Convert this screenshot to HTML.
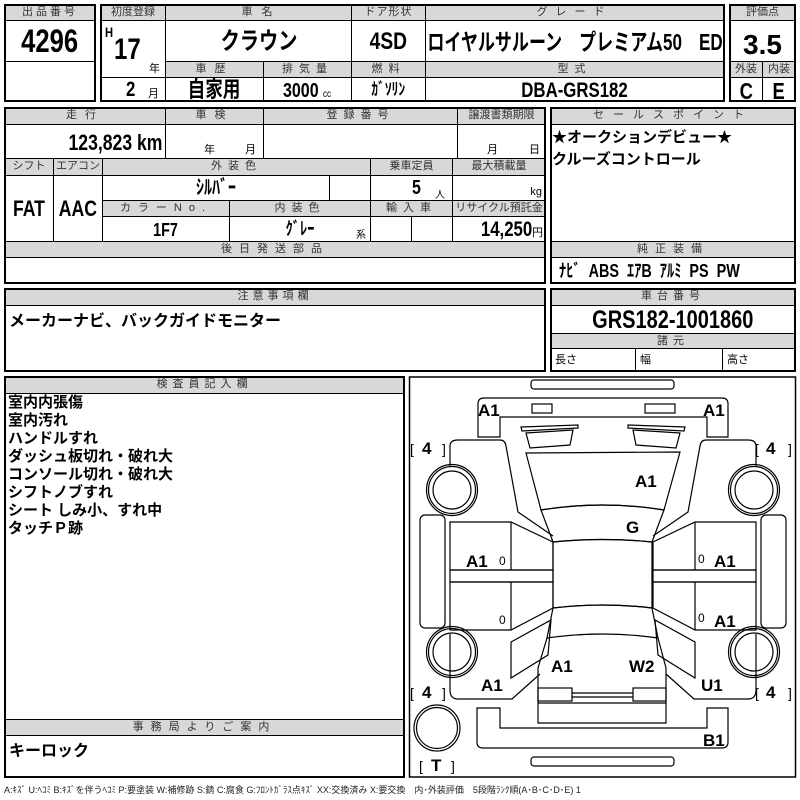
<!DOCTYPE html>
<html><head><meta charset="utf-8">
<style>
*{margin:0;padding:0}
body{width:800px;height:800px;background:#fff;position:relative;overflow:hidden;font-family:"Liberation Sans","Noto Sans CJK JP",sans-serif;color:#000}
.c{position:absolute;box-sizing:border-box;border:1px solid #000;overflow:hidden;white-space:nowrap;text-align:center}
.g{background:#d8d8d8;font-size:11px;color:#333;letter-spacing:3px;line-height:15px}
.v{font-weight:bold}
.n{display:inline-block;transform:scaleX(.8)}
.nr{display:inline-block;transform:scaleX(.8);transform-origin:right center}
.nl{display:inline-block;transform:scaleX(.8);transform-origin:left center}
.o{position:absolute;box-sizing:border-box;border:2px solid #000}
.t{position:absolute;white-space:nowrap}
.b{font-weight:bold}
</style></head><body>
<!-- block 1 -->
<div class="c g" style="left:4px;top:4px;width:92px;height:17px">出品番号</div>
<div class="c v" style="left:4px;top:20px;width:92px;height:42px;font-size:32px;line-height:40px"><span class="n">4296</span></div>
<div class="c" style="left:4px;top:61px;width:92px;height:41px"></div>
<div class="o" style="left:4px;top:4px;width:92px;height:98px"></div>
<!-- block 2 -->
<div class="c g" style="left:100px;top:4px;width:66px;height:17px;letter-spacing:0">初度登録</div>
<div class="c g" style="left:165px;top:4px;width:187px;height:17px">車 名</div>
<div class="c g" style="left:351px;top:4px;width:75px;height:17px;letter-spacing:1px">ドア形状</div>
<div class="c g" style="left:425px;top:4px;width:299px;height:17px;letter-spacing:8px">グレード</div>
<div class="c" style="left:100px;top:20px;width:66px;height:58px"></div>
<div class="t v" style="left:105px;top:24px;font-size:14px"><span class="nl">H</span></div>
<div class="t v" style="left:114px;top:33px;font-size:30px"><span class="nl">17</span></div>
<div class="t" style="left:149px;top:60px;font-size:11px">年</div>
<div class="c" style="left:100px;top:77px;width:66px;height:25px"></div>
<div class="t v" style="left:126px;top:78px;font-size:21px"><span class="nl">2</span></div>
<div class="t" style="left:148px;top:85px;font-size:11px">月</div>
<div class="c v" style="left:165px;top:20px;width:187px;height:42px;font-size:24px;line-height:42px"><span class="n">クラウン</span></div>
<div class="c v" style="left:351px;top:20px;width:75px;height:42px;font-size:24px;line-height:42px"><span class="n">4SD</span></div>
<div class="c v" style="left:425px;top:20px;width:299px;height:42px;font-size:23px;line-height:42px"><span style="position:absolute;left:50%;top:0;transform:translateX(-50%) scaleX(.74)">ロイヤルサルーン　プレミアム50　ED</span></div>
<div class="c g" style="left:165px;top:61px;width:99px;height:17px;letter-spacing:8px">車歴</div>
<div class="c g" style="left:263px;top:61px;width:89px;height:17px;letter-spacing:6px">排気量</div>
<div class="c g" style="left:351px;top:61px;width:75px;height:17px;letter-spacing:6px">燃料</div>
<div class="c g" style="left:425px;top:61px;width:299px;height:17px;letter-spacing:6px">型式</div>
<div class="c v" style="left:165px;top:77px;width:99px;height:25px;font-size:22px;line-height:24px"><span class="n">自家用</span></div>
<div class="c v" style="left:263px;top:77px;width:89px;height:25px;font-size:20px;line-height:26px"><span class="n">3000 <span style="font-size:10px;font-weight:normal">cc</span></span></div>
<div class="c v" style="left:351px;top:77px;width:75px;height:25px;font-size:17px;line-height:24px"><span class="n">ｶﾞｿﾘﾝ</span></div>
<div class="c v" style="left:425px;top:77px;width:299px;height:25px;font-size:21px;line-height:26px"><span class="n">DBA-GRS182</span></div>
<div class="o" style="left:100px;top:4px;width:625px;height:98px"></div>
<!-- block 3 -->
<div class="c g" style="left:729px;top:4px;width:67px;height:17px;letter-spacing:0">評価点</div>
<div class="c v" style="left:729px;top:20px;width:67px;height:42px;font-size:28px;line-height:48px">3.5</div>
<div class="c g" style="left:729px;top:61px;width:34px;height:17px;letter-spacing:0">外装</div>
<div class="c g" style="left:762px;top:61px;width:34px;height:17px;letter-spacing:0">内装</div>
<div class="c v" style="left:729px;top:77px;width:34px;height:25px;font-size:23px;line-height:26px"><span class="n">C</span></div>
<div class="c v" style="left:762px;top:77px;width:34px;height:25px;font-size:23px;line-height:26px"><span class="n">E</span></div>
<div class="o" style="left:729px;top:4px;width:67px;height:98px"></div>
<!-- section 2 -->
<div class="c g" style="left:4px;top:107px;width:162px;height:18px;letter-spacing:8px">走行</div>
<div class="c g" style="left:165px;top:107px;width:99px;height:18px;letter-spacing:8px">車検</div>
<div class="c g" style="left:263px;top:107px;width:195px;height:18px;letter-spacing:6px">登録番号</div>
<div class="c g" style="left:457px;top:107px;width:89px;height:18px;letter-spacing:0">譲渡書類期限</div>
<div class="c v" style="left:4px;top:124px;width:162px;height:35px;font-size:22px;line-height:36px;text-align:right;padding-right:3px"><span class="nr">123,823 km</span></div>
<div class="c" style="left:165px;top:124px;width:99px;height:35px"></div>
<div class="t" style="left:204px;top:141px;font-size:11px">年</div><div class="t" style="left:245px;top:141px;font-size:11px">月</div>
<div class="c" style="left:263px;top:124px;width:195px;height:35px"></div>
<div class="c" style="left:457px;top:124px;width:89px;height:35px"></div>
<div class="t" style="left:487px;top:141px;font-size:11px">月</div><div class="t" style="left:529px;top:141px;font-size:11px">日</div>
<div class="c g" style="left:4px;top:158px;width:50px;height:18px;letter-spacing:0">シフト</div>
<div class="c g" style="left:53px;top:158px;width:50px;height:18px;letter-spacing:0">エアコン</div>
<div class="c g" style="left:102px;top:158px;width:269px;height:18px;letter-spacing:6px">外装色</div>
<div class="c g" style="left:370px;top:158px;width:83px;height:18px;letter-spacing:0">乗車定員</div>
<div class="c g" style="left:452px;top:158px;width:94px;height:18px;letter-spacing:0">最大積載量</div>
<div class="c v" style="left:4px;top:175px;width:50px;height:67px;font-size:22px;line-height:66px"><span class="n">FAT</span></div>
<div class="c v" style="left:53px;top:175px;width:50px;height:67px;font-size:22px;line-height:66px"><span class="n">AAC</span></div>
<div class="c v" style="left:102px;top:175px;width:228px;height:26px;font-size:20px;line-height:25px"><span class="n">ｼﾙﾊﾞｰ</span></div>
<div class="c" style="left:329px;top:175px;width:42px;height:26px"></div>
<div class="c" style="left:370px;top:175px;width:83px;height:26px"></div>
<div class="t v" style="left:412px;top:177px;font-size:20px"><span class="nl">5</span></div><div class="t" style="left:435px;top:186px;font-size:10px">人</div>
<div class="c" style="left:452px;top:175px;width:94px;height:26px;text-align:right;font-size:11px;line-height:32px;padding-right:3px">kg</div>
<div class="c g" style="left:102px;top:200px;width:128px;height:17px;letter-spacing:7px">カラーNo.</div>
<div class="c g" style="left:229px;top:200px;width:142px;height:17px;letter-spacing:6px">内装色</div>
<div class="c g" style="left:370px;top:200px;width:83px;height:17px;letter-spacing:6px">輸入車</div>
<div class="c g" style="left:452px;top:200px;width:94px;height:17px;letter-spacing:0">リサイクル預託金</div>
<div class="c v" style="left:102px;top:216px;width:128px;height:26px;font-size:18px;line-height:26px"><span class="n">1F7</span></div>
<div class="c v" style="left:229px;top:216px;width:142px;height:26px;font-size:18px;line-height:25px"><span class="n">ｸﾞﾚｰ</span></div>
<div class="t" style="left:356px;top:226px;font-size:10px">系</div>
<div class="c" style="left:370px;top:216px;width:42px;height:26px"></div>
<div class="c" style="left:411px;top:216px;width:42px;height:26px"></div>
<div class="c v" style="left:452px;top:216px;width:94px;height:26px;font-size:21px;line-height:26px;text-align:right;padding-right:2px"><span class="nr">14,250</span><span style="font-size:11px;font-weight:normal">円</span></div>
<div class="c g" style="left:4px;top:241px;width:542px;height:17px;letter-spacing:7px">後日発送部品</div>
<div class="c" style="left:4px;top:257px;width:542px;height:27px"></div>
<div class="o" style="left:4px;top:107px;width:542px;height:177px"></div>
<!-- sales point -->
<div class="c g" style="left:550px;top:107px;width:246px;height:18px;letter-spacing:9px">セールスポイント</div>
<div class="c" style="left:550px;top:124px;width:246px;height:118px"></div>
<div class="t b" style="left:552px;top:127px;font-size:15px;line-height:22px">★オークションデビュー★<br>クルーズコントロール</div>
<div class="c g" style="left:550px;top:241px;width:246px;height:17px;letter-spacing:7px">純正装備</div>
<div class="c v" style="left:550px;top:257px;width:246px;height:27px;font-size:18px;line-height:26px;text-align:left;padding-left:8px"><span class="nl">ﾅﾋﾞ&nbsp;&nbsp;ABS&nbsp;&nbsp;ｴｱB&nbsp;&nbsp;ｱﾙﾐ&nbsp;&nbsp;PS&nbsp;&nbsp;PW</span></div>
<div class="o" style="left:550px;top:107px;width:246px;height:177px"></div>
<!-- section 3 -->
<div class="c g" style="left:4px;top:288px;width:542px;height:18px;letter-spacing:4px">注意事項欄</div>
<div class="c" style="left:4px;top:305px;width:542px;height:67px"></div>
<div class="t b" style="left:9px;top:307px;font-size:16px">メーカーナビ、バックガイドモニター</div>
<div class="o" style="left:4px;top:288px;width:542px;height:84px"></div>
<div class="c g" style="left:550px;top:288px;width:246px;height:18px;letter-spacing:5px">車台番号</div>
<div class="c v" style="left:550px;top:305px;width:246px;height:29px;font-size:25px;line-height:28px"><span class="n">GRS182-1001860</span></div>
<div class="c g" style="left:550px;top:333px;width:246px;height:16px;letter-spacing:5px;line-height:14px">諸元</div>
<div class="c" style="left:550px;top:348px;width:86px;height:24px;text-align:left;font-size:11px;line-height:22px;padding-left:4px">長さ</div>
<div class="c" style="left:635px;top:348px;width:88px;height:24px;text-align:left;font-size:11px;line-height:22px;padding-left:4px">幅</div>
<div class="c" style="left:722px;top:348px;width:74px;height:24px;text-align:left;font-size:11px;line-height:22px;padding-left:4px">高さ</div>
<div class="o" style="left:550px;top:288px;width:246px;height:84px"></div>
<!-- section 4 -->
<div class="c g" style="left:4px;top:376px;width:401px;height:18px;letter-spacing:5px">検査員記入欄</div>
<div class="c" style="left:4px;top:393px;width:401px;height:327px"></div>
<div class="t b" style="left:8px;top:394px;font-size:15px;line-height:18px">室内内張傷<br>室内汚れ<br>ハンドルすれ<br>ダッシュ板切れ・破れ大<br>コンソール切れ・破れ大<br>シフトノブすれ<br>シート しみ小、すれ中<br>タッチＰ跡</div>
<div class="c g" style="left:4px;top:719px;width:401px;height:17px;letter-spacing:7px">事務局よりご案内</div>
<div class="c" style="left:4px;top:735px;width:401px;height:43px"></div>
<div class="t b" style="left:9px;top:737px;font-size:16px">キーロック</div>
<div class="o" style="left:4px;top:376px;width:401px;height:402px"></div>
<div class="t" style="left:4px;top:783px;font-size:9px;color:#222">A:ｷｽﾞ U:ﾍｺﾐ B:ｷｽﾞを伴うﾍｺﾐ P:要塗装 W:補修跡 S:錆 C:腐食 G:ﾌﾛﾝﾄｶﾞﾗｽ点ｷｽﾞ XX:交換済み X:要交換　内･外装評価　5段階ﾗﾝｸ順(A･B･C･D･E) 1</div>
<!-- diagram -->
<svg style="position:absolute;left:0;top:0" width="800" height="800" viewBox="0 0 800 800">
<g fill="none" stroke="#000" stroke-width="1.2">
<rect x="409.5" y="377" width="386" height="400" stroke-width="1.5"/>
<rect x="531" y="380" width="143" height="9" rx="3"/>
<rect x="531" y="757" width="143" height="9" rx="3"/>
<path d="M478,437 V404 Q478,398 484,398 H722 Q728,398 728,404 V437 H707 V417 H500 V437 Z"/>
<rect x="532" y="404" width="20" height="9"/><rect x="645" y="404" width="30" height="9"/>
<path d="M477,708 H500 V728 H707 V708 H728 V742 Q728,748 722,748 H483 Q477,748 477,742 Z"/>
<path d="M521,427 L578,425 L578,428 L522,431 Z M685,427 L628,425 L628,428 L684,431 Z"/>
<path d="M526,433 L573,430 L570,445 L530,448 Z M680,433 L633,430 L636,445 L676,448 Z"/>
<path d="M526,453 L680,452 L664,510 Q603,500 541,510 Z"/>
<path d="M541,510 Q603,500 664,510 L652,542 Q603,537 553,542 Z"/>
<path d="M553,542 Q603,537 652,542 V608 Q603,602 553,608 Z"/>
<path d="M553,608 Q603,602 652,608 L658,638 Q603,630 547,638 Z"/>
<path d="M547,638 L538,668 V723 H666 V668 L658,638"/>
<line x1="538" y1="703" x2="666" y2="703"/>
<rect x="538" y="688" width="34" height="13"/><rect x="633" y="688" width="33" height="13"/>
<line x1="572" y1="693" x2="633" y2="693"/><line x1="572" y1="697" x2="633" y2="697"/>
<g id="L">
<path d="M450,466 V446 Q450,440 458,440 H500 Q505,440 506,446 L518,512 L553,536"/>
<path d="M450,522 H511 L553,542 V570 H450 Z"/><line x1="511" y1="522" x2="511" y2="570"/>
<rect x="450" y="570" width="103" height="12"/>
<path d="M450,582 H553 V608 L511,630 H450 Z"/><line x1="511" y1="582" x2="511" y2="630"/>
<path d="M511,642 L551,620 L548,655 L511,678 Z"/>
<path d="M450,634 V690 Q450,699 458,699 H512 L540,674"/>
<rect x="420" y="515" width="25" height="113" rx="5"/>
<circle cx="452" cy="490" r="25.5"/><circle cx="452" cy="490" r="23.5"/><circle cx="452" cy="490" r="19"/>
<circle cx="452" cy="652" r="25.5"/><circle cx="452" cy="652" r="23.5"/><circle cx="452" cy="652" r="19"/>
</g>
<use href="#L" transform="translate(1206,0) scale(-1,1)"/>
<circle cx="437" cy="728" r="23"/><circle cx="437" cy="728" r="20.5"/>
</g>
<g font-family="Liberation Sans, sans-serif" font-weight="bold" font-size="17" fill="#000">
<text x="478" y="416">A1</text><text x="703" y="416">A1</text>
<text x="635" y="487">A1</text><text x="626" y="533">G</text>
<text x="466" y="567">A1</text><text x="714" y="567">A1</text>
<text x="714" y="627">A1</text>
<text x="551" y="672">A1</text><text x="629" y="672">W2</text>
<text x="481" y="691">A1</text><text x="701" y="691">U1</text>
<text x="703" y="746">B1</text>
<text x="422" y="454">4</text><text x="766" y="454">4</text>
<text x="422" y="698">4</text><text x="766" y="698">4</text>
<text x="431" y="771">T</text>
</g>
<g font-family="Liberation Sans, sans-serif" font-size="14" fill="#000">
<text x="410" y="454">[</text><text x="442" y="454">]</text>
<text x="755" y="454">[</text><text x="788" y="454">]</text>
<text x="410" y="698">[</text><text x="442" y="698">]</text>
<text x="755" y="698">[</text><text x="788" y="698">]</text>
<text x="419" y="771">[</text><text x="451" y="771">]</text>
</g>
<g font-family="Liberation Sans, sans-serif" font-size="12" fill="#000">
<text x="499" y="565">0</text><text x="499" y="624">0</text>
<text x="698" y="563">0</text><text x="698" y="622">0</text>
</g>
</svg>
</body></html>
